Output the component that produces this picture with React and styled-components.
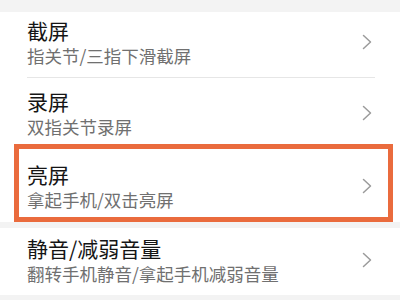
import React from 'react';
import styled, { createGlobalStyle } from 'styled-components';

const GlobalStyle = createGlobalStyle`
    html, body {
        margin: 0;
        padding: 0;
        background: #f3f3f3;
    }
    body {
        font-family: "Noto Sans CJK SC", "Noto Sans", sans-serif;
        width: 400px;
        height: 300px;
        overflow: hidden;
    }
`;

const Page = styled.div`
    padding-top: 12px;
`;

const Card = styled.div`
    background: #fff;
    margin-bottom: ${p => p.$gap || 0}px;
`;

const Row = styled.div`
    display: flex;
    align-items: center;
    padding: ${p => p.$top}px 28px ${p => p.$bottom}px 27px;
`;

const Highlight = styled(Row)`
    border: 5px solid #ea6b3d;
    margin: 0 7px 5px 14px;
    padding-left: 8px;
    padding-right: 16px;
`;

const Text = styled.div`
    flex: 1;
    min-width: 0;
`;

const Title = styled.div`
    font-size: 21px;
    line-height: 27px;
    color: #151515;
`;

const Sub = styled.div`
    font-size: 17.5px;
    line-height: 23px;
    color: #707070;
`;

const Divider = styled.div`
    height: 1px;
    background: #e6e6e6;
    margin: 0 25px 0 27px;
`;

const Chevron = () => (
    <svg width="10" height="16" viewBox="0 0 10 16">
        <polyline points="1.5,1.5 8.5,8 1.5,14.5" fill="none" stroke="#9b9b9b" strokeWidth="1.5" strokeLinecap="round" strokeLinejoin="round" />
    </svg>
);

const Item = ({ title, sub }) => (
    <>
        <Text>
            <Title>{title}</Title>
            <Sub>{sub}</Sub>
        </Text>
        <Chevron />
    </>
);

const App = () => {
    return (
        <>
            <GlobalStyle />
            <Page>
                <Card $gap={6}>
                    <Row $top={5} $bottom={10}>
                        <Item title="截屏" sub="指关节/三指下滑截屏" />
                    </Row>
                    <Divider />
                    <Row $top={10} $bottom={6}>
                        <Item title="录屏" sub="双指关节录屏" />
                    </Row>
                    <Highlight $top={12} $bottom={6}>
                        <Item title="亮屏" sub="拿起手机/双击亮屏" />
                    </Highlight>
                </Card>
                <Card>
                    <Row $top={7} $bottom={10}>
                        <Item title="静音/减弱音量" sub="翻转手机静音/拿起手机减弱音量" />
                    </Row>
                </Card>
            </Page>
        </>
    );
};

export default App;
